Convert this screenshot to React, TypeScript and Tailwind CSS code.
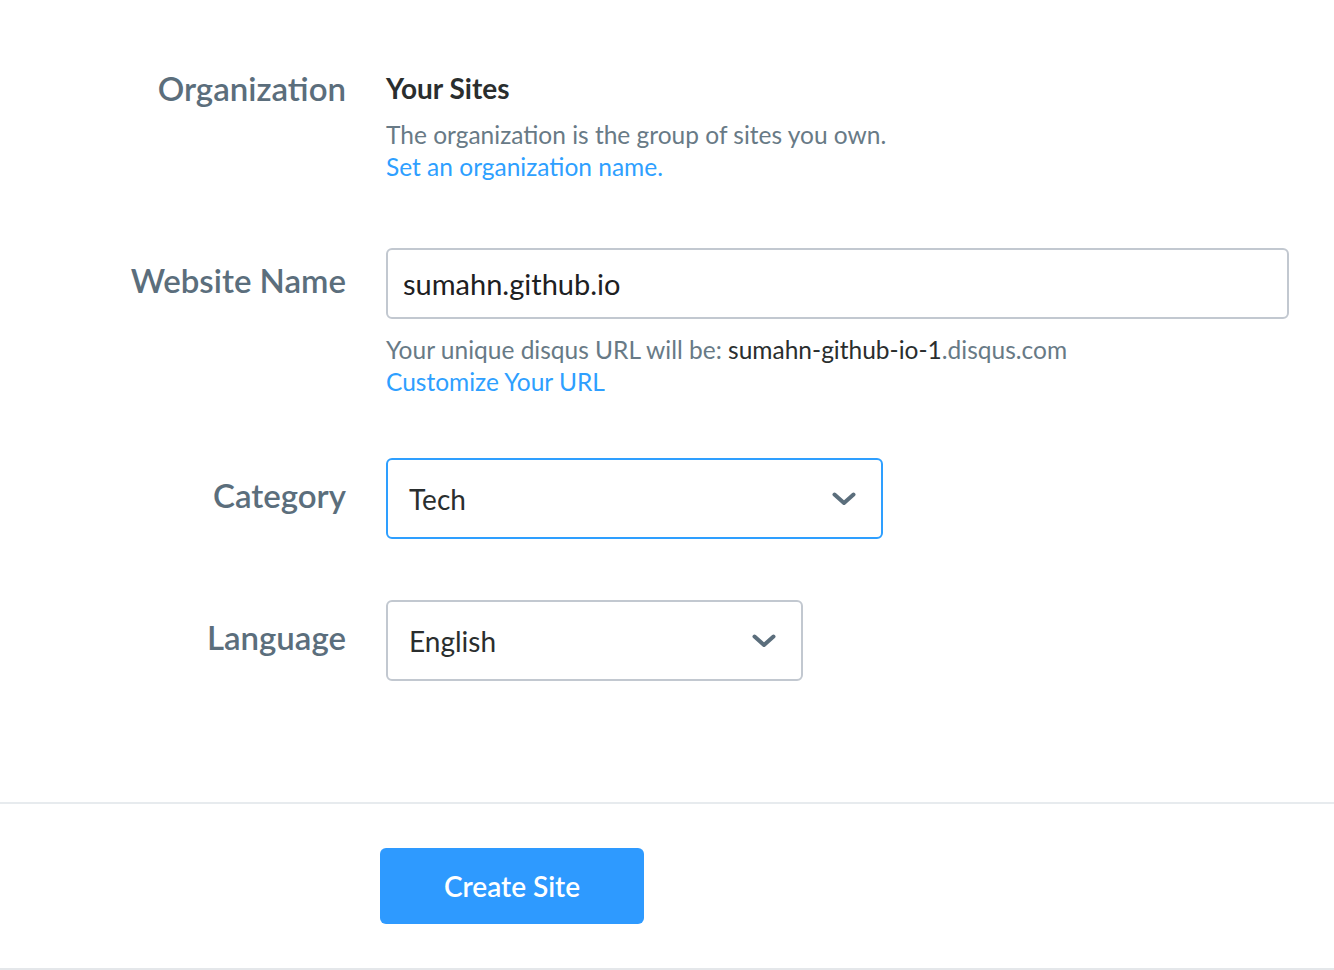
import React, { useState } from "react";

const Chevron = () => (
  <svg width="24" height="14" viewBox="0 0 24 14" fill="none" className="shrink-0">
    <path d="M2.5 2.5 L12 11 L21.5 2.5" stroke="#5b6e7c" strokeWidth="4" strokeLinecap="round" strokeLinejoin="round" />
  </svg>
);

const Label = ({ children, className = "" }: { children: React.ReactNode; className?: string }) => (
  <div className={`w-[346px] shrink-0 text-right text-[33px] font-semibold leading-[36px] text-[#5b6e7c] ${className}`}>
    {children}
  </div>
);

const App = () => {
  const [siteName, setSiteName] = useState("sumahn.github.io");

  return (
    <div className="min-h-screen bg-white font-['Lato',sans-serif]">
      <div className="pt-[70px]">
        {/* Organization */}
        <div className="flex gap-10">
          <Label>Organization</Label>
          <div>
            <div className="text-[28px] font-bold leading-[36px] text-[#2a2e2e]">Your Sites</div>
            <p className="mt-[13px] text-[24.5px] leading-[32px] text-[#687a86]">
              The organization is the group of sites you own.
            </p>
            <a href="#" className="block text-[24.5px] leading-[32px] text-[#2e9fff]">
              Set an organization name.
            </a>
          </div>
        </div>

        {/* Website name */}
        <div className="mt-[65px] flex gap-10">
          <Label className="pt-[14px]">Website Name</Label>
          <div>
            <input
              type="text"
              value={siteName}
              onChange={(e) => setSiteName(e.target.value)}
              className="h-[71px] w-[903px] rounded-md border-2 border-[#c2c8d0] px-[15px] text-[29px] text-[#1d2022] focus:outline-none"
            />
            <p className="mt-[15px] text-[24.5px] leading-[32px] text-[#687a86]">
              Your unique disqus URL will be: <span className="text-[#2a2e2e]">sumahn-github-io-1</span>.disqus.com
            </p>
            <a href="#" className="block text-[24.5px] leading-[32px] text-[#2e9fff]">
              Customize Your URL
            </a>
          </div>
        </div>

        {/* Category */}
        <div className="mt-[60px] flex gap-10">
          <Label className="pt-[19px]">Category</Label>
          <div className="flex h-[81px] w-[497px] items-center justify-between rounded-md border-2 border-[#2e9fff] pl-[21px] pr-[25px] text-[28px] text-[#2a2e2e]">
            <span>Tech</span>
            <Chevron />
          </div>
        </div>

        {/* Language */}
        <div className="mt-[61px] flex gap-10">
          <Label className="pt-[19px]">Language</Label>
          <div className="flex h-[81px] w-[417px] items-center justify-between rounded-md border-2 border-[#c2c8d0] pl-[21px] pr-[25px] text-[28px] text-[#2a2e2e]">
            <span>English</span>
            <Chevron />
          </div>
        </div>
      </div>

      <div className="mt-[121px] border-t-2 border-[#e7ebee]">
        <div className="flex pl-[380px] pt-[44px] pb-[44px]">
          <button className="h-[76px] w-[264px] rounded-md bg-[#2e9aff] text-[28px] font-semibold text-white">
            Create Site
          </button>
        </div>
        <div className="border-b-2 border-[#e4e7ea]" />
      </div>
    </div>
  );
};

export default App;
